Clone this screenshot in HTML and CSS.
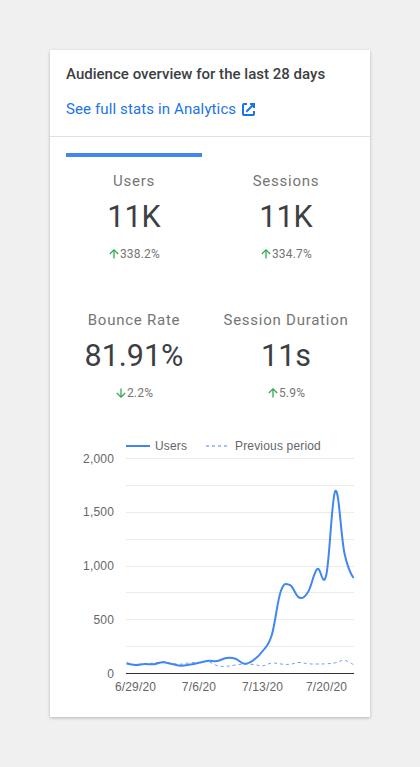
FILE: index.html
```html
<!DOCTYPE html>
<html lang="en">
<head>
<meta charset="utf-8">
<title>Audience overview</title>
<link rel="stylesheet" href="styles.css">
</head>
<body>
<main class="card">
  <header class="head">
    <h1 class="title">Audience overview for the last 28 days</h1>
    <a class="link" href="#"><span>See full stats in Analytics</span><svg class="ext" width="13" height="13" viewBox="0 0 13 13"><path d="M5 1H2Q1 1 1 2V11Q1 12 2 12H11Q12 12 12 11V8M8 1H12V5M11.7 1.3L4.3 8.7"/></svg></a>
  </header>
  <section class="stats">
    <div class="stat active"><div class="name">Users</div><div class="value">11K</div><div class="delta"><svg class="arrow" width="10" height="10" viewBox="0 0 10 10"><path d="M5 9.5V1M.8 5L5 .9L9.2 5"/></svg><span>338.2%</span></div></div>
    <div class="stat"><div class="name">Sessions</div><div class="value">11K</div><div class="delta"><svg class="arrow" width="10" height="10" viewBox="0 0 10 10"><path d="M5 9.5V1M.8 5L5 .9L9.2 5"/></svg><span>334.7%</span></div></div>
    <div class="stat"><div class="name">Bounce Rate</div><div class="value">81.91%</div><div class="delta"><svg class="arrow" width="10" height="10" viewBox="0 0 10 10"><path d="M5 .5V9M.8 5L5 9.1L9.2 5"/></svg><span>2.2%</span></div></div>
    <div class="stat"><div class="name">Session Duration</div><div class="value">11s</div><div class="delta"><svg class="arrow" width="10" height="10" viewBox="0 0 10 10"><path d="M5 9.5V1M.8 5L5 .9L9.2 5"/></svg><span>5.9%</span></div></div>
  </section>
  <svg class="chart" width="320" height="270" viewBox="50 430 320 270">
    <path class="key" d="M126 446H150"/>
    <text x="155" y="450">Users</text>
    <path class="key-prev" d="M206 446H228"/>
    <text x="235" y="450">Previous period</text>
    <path class="grid" d="M126 458.5H354M126 485.5H354M126 512.5H354M126 539.5H354M126 566.5H354M126 592.5H354M126 619.5H354M126 646.5H354"/>
    <path class="axis" d="M126 673.5H354"/>
    <path class="prev" id="prev"/>
    <path class="line" id="users"/>
    <g text-anchor="end">
      <text x="114" y="463">2,000</text>
      <text x="114" y="516">1,500</text>
      <text x="114" y="570">1,000</text>
      <text x="114" y="624">500</text>
      <text x="114" y="678">0</text>
    </g>
    <g text-anchor="middle">
      <text x="135.5" y="691">6/29/20</text>
      <text x="199" y="691">7/6/20</text>
      <text x="262.5" y="691">7/13/20</text>
      <text x="326.5" y="691">7/20/20</text>
    </g>
  </svg>
</main>
<script src="chart.js"></script>
</body>
</html>
```
FILE: styles.css
```css
body {
  margin: 0;
  padding: 50px;
  background: #f0f0f0;
  font-family: Roboto, sans-serif;
}
.card {
  width: 320px;
  height: 667px;
  background: #fff;
  box-shadow: 0 1px 3px rgba(0, 0, 0, .25);
}
.head {
  box-sizing: border-box;
  height: 87px;
  padding: 14px 16px 0;
  border-bottom: 1px solid #e0e0e0;
}
.title {
  margin: 0 0 15px;
  font-size: 15px;
  line-height: 20px;
  font-weight: 500;
  letter-spacing: .02px;
  color: #3c4043;
  white-space: nowrap;
}
.link {
  display: flex;
  align-items: center;
  gap: 6px;
  font-size: 15px;
  line-height: 20px;
  letter-spacing: .12px;
  color: #1a73e8;
  text-decoration: none;
}
.ext {
  fill: none;
  stroke: #1a73e8;
  stroke-width: 2;
}
.stats {
  display: grid;
  grid-template-columns: 136px 136px;
  column-gap: 16px;
  grid-auto-rows: 139px;
  padding: 16px 16px 0;
}
.stat {
  border-top: 4px solid transparent;
  text-align: center;
  white-space: nowrap;
}
.active {
  border-color: #4285f4;
}
.name {
  margin-top: 14px;
  font-size: 15px;
  line-height: 20px;
  letter-spacing: .75px;
  color: #757575;
}
.value {
  margin-top: 6px;
  font-size: 30.5px;
  line-height: 40px;
  color: #3c4043;
}
.delta {
  display: flex;
  justify-content: center;
  align-items: center;
  gap: 1px;
  margin-top: 9px;
  padding-left: 1px;
  font-size: 12px;
  line-height: 16px;
  letter-spacing: .2px;
  color: #757575;
}
.arrow {
  fill: none;
  stroke: #34a853;
  stroke-width: 1.3;
}
.chart {
  display: block;
  margin-top: -1px;
  font: 12px "Liberation Sans", sans-serif;
  letter-spacing: .17px;
  fill: #666;
}
.chart path {
  fill: none;
}
.grid {
  stroke: #ebebeb;
}
.axis {
  stroke: #333;
}
.key, .line {
  stroke: #4285f4;
  stroke-width: 2;
}
.key-prev {
  stroke: #a0c2f9;
  stroke-width: 2;
  stroke-dasharray: 3 3;
}
.prev {
  stroke: #6b9ff6;
  stroke-dasharray: 3 3;
}
```
FILE: chart.js
```javascript
// Vertical positions of the daily values, left to right.
const users = [663.5, 665, 664, 664.2, 662.3, 664, 665.8, 664.6, 662.7, 660.8, 661, 658, 658.7, 663.8, 660, 651, 635, 591, 585, 597.5, 592, 569, 575, 491, 553, 578];
const previous = [662.5, 664.8, 663.5, 663.2, 661.8, 663.5, 664.2, 662.7, 662.5, 661.7, 665.7, 666.3, 665, 664, 664.5, 665.8, 663, 664, 664.3, 662.5, 663.8, 664, 663.8, 662.8, 660.3, 664.7];
const X0 = 126.5, STEP = 9.08, TENSION = 0.19;

function smooth(ys) {
  const slope = i => i === 0 || i === ys.length - 1 ? 0 : (ys[i + 1] - ys[i - 1]) * TENSION;
  const end = ys.length - 1;
  let d = `M${X0} ${ys[0]}`;
  for (let i = 0; i < end; i++) {
    const a = X0 + STEP * i, b = a + STEP, h = STEP * TENSION * 2;
    const first = i === 0, last = i === end - 1;
    d += `C${first ? a : a + h} ${ys[i] + slope(i)} ${last ? b : b - h} ${ys[i + 1] - slope(i + 1)} ${b} ${ys[i + 1]}`;
  }
  return d;
}

document.getElementById('users').setAttribute('d', smooth(users));
document.getElementById('prev').setAttribute('d', smooth(previous));
```
